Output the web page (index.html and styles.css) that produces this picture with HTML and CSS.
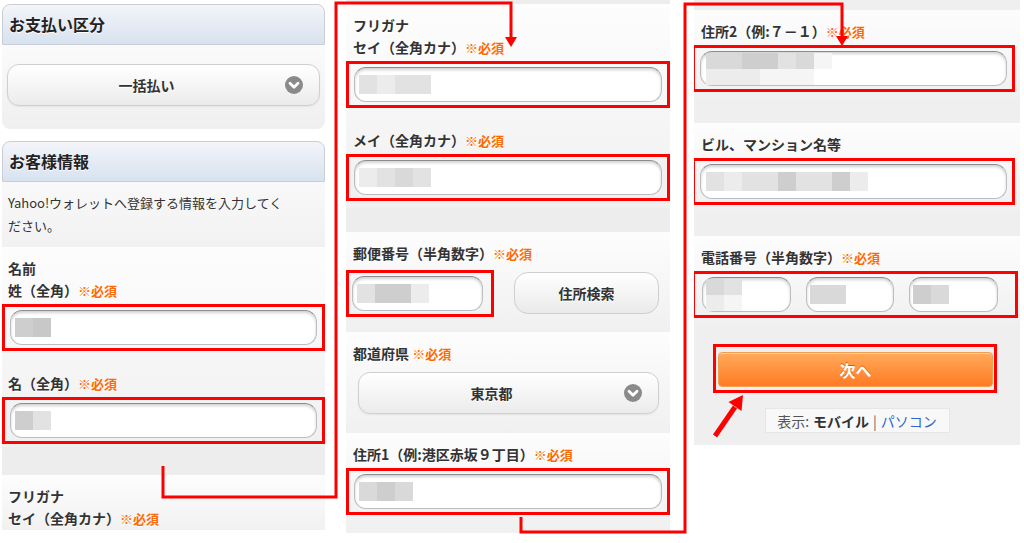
FILE: index.html
```html
<!DOCTYPE html>
<html lang="ja">
<head>
<meta charset="utf-8">
<title>Yahoo!ウォレット 登録</title>
<link rel="stylesheet" href="styles.css">
</head>
<body>
<div class="page">
  <div class="panel p1">
    <div class="hdr">お支払い区分</div>
    <div class="hdr-body">
      <div class="select">
        <span class="sel-text">一括払い</span>
        <svg class="sel-icon" viewBox="0 0 18 18"><circle cx="9" cy="9" r="9" fill="#8a8a8a"/><path d="M5 7.2 L9 11.2 L13 7.2" fill="none" stroke="#fff" stroke-width="2.8" stroke-linecap="round" stroke-linejoin="round"/></svg>
      </div>
    </div>
    <div class="hdr hdr-second">お客様情報</div>
    <div class="intro">Yahoo!ウォレットへ登録する情報を入力してく<br>ださい。</div>
    <div class="sec sec-tight">
      <div class="lbl">名前</div>
      <div class="lbl">姓（全角）<span class="req">※必須</span></div>
      <div class="rb"><div class="inp"><div class="mz"><i class="d"></i><i class="e"></i></div></div></div>
      <div class="lbl gap">名（全角）<span class="req">※必須</span></div>
      <div class="rb"><div class="inp"><div class="mz"><i class="d"></i><i class="b"></i></div></div></div>
    </div>
    <div class="band band-tall"></div>
    <div class="sec sec-fill">
      <div class="lbl">フリガナ</div>
      <div class="lbl">セイ（全角カナ）<span class="req">※必須</span></div>
    </div>
  </div>

  <div class="panel p2">
    <div class="sec first-sec">
      <div class="lbl">フリガナ</div>
      <div class="lbl">セイ（全角カナ）<span class="req">※必須</span></div>
      <div class="rb"><div class="inp"><div class="mz"><i class="b"></i><i class="a"></i><i class="b"></i><i class="b"></i></div></div></div>
      <div class="lbl gap">メイ（全角カナ）<span class="req">※必須</span></div>
      <div class="rb"><div class="inp"><div class="mz"><i class="a"></i><i class="b"></i><i class="c"></i><i class="b"></i></div></div></div>
    </div>
    <div class="band"></div>
    <div class="sec zip-sec">
      <div class="lbl">郵便番号（半角数字）<span class="req">※必須</span></div>
      <div class="ziprow">
        <div class="rb rb-zip"><div class="inp"><div class="mz"><i class="b"></i><i class="d"></i><i class="d"></i><i class="a"></i></div></div></div>
        <div class="btn">住所検索</div>
      </div>
    </div>
    <div class="sec">
      <div class="lbl">都道府県 <span class="req">※必須</span></div>
      <div class="selwrap">
        <div class="select">
          <span class="sel-text">東京都</span>
          <svg class="sel-icon" viewBox="0 0 18 18"><circle cx="9" cy="9" r="9" fill="#8a8a8a"/><path d="M5 7.2 L9 11.2 L13 7.2" fill="none" stroke="#fff" stroke-width="2.8" stroke-linecap="round" stroke-linejoin="round"/></svg>
        </div>
      </div>
    </div>
    <div class="sec sec-fill">
      <div class="lbl">住所1（例:港区赤坂９丁目）<span class="req">※必須</span></div>
      <div class="rb"><div class="inp"><div class="mz"><i class="c"></i><i class="d"></i><i class="c"></i></div></div></div>
    </div>
  </div>

  <div class="panel p3">
    <div class="sec first-sec3">
      <div class="lbl">住所2（例:７－１）<span class="req">※必須</span></div>
      <div class="rb rb3"><div class="inp inp-wide"><div class="mz2">
        <div class="mzr"><i class="c"></i><i class="c"></i><i class="d"></i><i class="d"></i><i class="b"></i><i class="c"></i><i class="f"></i></div>
        <div class="mzr"><i class="a"></i><i class="a"></i><i class="a"></i><i class="f"></i><i class="f"></i><i class="f"></i></div>
      </div></div></div>
    </div>
    <div class="band"></div>
    <div class="sec">
      <div class="lbl">ビル、マンション名等</div>
      <div class="rb rb3"><div class="inp inp-wide"><div class="mz"><i class="b"></i><i class="a"></i><i class="b"></i><i class="b"></i><i class="d"></i><i class="b"></i><i class="b"></i><i class="d"></i><i class="a"></i></div></div></div>
    </div>
    <div class="band"></div>
    <div class="sec">
      <div class="lbl">電話番号（半角数字）<span class="req">※必須</span></div>
      <div class="rb rb-tel">
        <div class="inp inp-tel"><div class="mz2">
          <div class="mzr"><i class="c"></i><i class="b"></i></div>
          <div class="mzr"><i class="a"></i><i class="f"></i></div>
        </div></div>
        <div class="inp inp-tel"><div class="mz"><i class="c"></i><i class="c"></i></div></div>
        <div class="inp inp-tel"><div class="mz"><i class="d"></i><i class="c"></i></div></div>
      </div>
    </div>
    <div class="foot">
      <div class="nextbox"><div class="next">次へ</div></div>
      <div class="view">表示: <b>モバイル</b><span class="sep">|</span><span class="pc">パソコン</span></div>
    </div>
  </div>
</div>

<svg class="notes" viewBox="0 0 1024 543" width="1024" height="543">
  <path d="M163 466 V497 H336 V3 H511 V38" fill="none" stroke="#f00" stroke-width="3"/>
  <polygon points="505,37 517,37 511,47" fill="#f00"/>
  <path d="M521 517 V532 H685 V4 H842 V37" fill="none" stroke="#f00" stroke-width="3"/>
  <polygon points="836,36 848,36 842,46" fill="#f00"/>
  <line x1="715" y1="436" x2="735" y2="407" stroke="#f00" stroke-width="5"/>
  <polygon points="743,395 741.5,411 728.5,402" fill="#f00"/>
</svg>
</body>
</html>
```

FILE: styles.css
```css
* {
  box-sizing: border-box;
  margin: 0;
  padding: 0;
}

body {
  margin: 0;
  width: 1024px;
  height: 543px;
  overflow: hidden;
  position: relative;
  background: #ffffff;
  font-family: "Noto Sans CJK JP", "Noto Sans", sans-serif;
  color: #333333;
}

.page {
  display: flex;
  align-items: flex-start;
  padding-left: 2px;
}

.panel {
  display: flex;
  flex-direction: column;
  overflow: hidden;
  flex: none;
}

.p1 {
  width: 323px;
  height: 526px;
  margin-top: 4px;
}

.p2 {
  width: 324px;
  height: 533px;
  margin-left: 21px;
  background: #ededed;
}

.p3 {
  width: 326px;
  height: 445px;
  margin-left: 24px;
  background: #efefef;
}

/* headers */
.hdr {
  flex: none;
  height: 41px;
  border: 1px solid #c9ced6;
  border-radius: 8px 8px 0 0;
  background: linear-gradient(#f3f5f9, #d8e2f0);
  font-size: 16px;
  font-weight: 700;
  line-height: 39px;
  padding-left: 6px;
  color: #222222;
  text-shadow: 0 1px 0 #ffffff;
}

.hdr-second {
  margin-top: 12px;
}

.hdr-body {
  flex: none;
  height: 84px;
  padding: 19px 5px 0;
  background: linear-gradient(#fbfbfb, #efefef);
  border-radius: 0 0 8px 8px;
}

/* select */
.select {
  height: 42px;
  border: 1px solid #cfcfcf;
  border-radius: 12px;
  background: linear-gradient(#ffffff, #ebebeb);
  display: flex;
  align-items: center;
  padding: 0 16px 0 10px;
  box-shadow: 0 1px 2px rgba(0, 0, 0, 0.06);
}

.sel-text {
  flex: 1;
  text-align: center;
  font-size: 14px;
  font-weight: 700;
  color: #333333;
  text-shadow: 0 1px 0 #ffffff;
}

.sel-icon {
  width: 18px;
  height: 18px;
  margin-left: 10px;
  flex: none;
}

.selwrap {
  padding: 8px 11px 12px 12px;
}

.intro {
  flex: none;
  height: 65px;
  padding: 9px 6px 0;
  font-size: 13px;
  line-height: 23px;
  background: linear-gradient(#f9f9f9, #f1f1f1);
  color: #333333;
}

/* sections */
.sec {
  flex: none;
  background: linear-gradient(#fdfdfd, #f0f0f0);
  padding: 10px 0 7px;
}

.sec-tight {
  padding-bottom: 3px;
}

.sec-fill {
  flex: 1;
}

.first-sec {
  margin-top: 4px;
}

.first-sec3 {
  margin-top: 10px;
}

.zip-sec {
  padding-bottom: 15px;
}

.band {
  flex: none;
  height: 24px;
  background: #ededed;
}

.p3 .band {
  background: #efefef;
}

.band-tall {
  height: 28px;
}

.lbl {
  height: 22px;
  font-size: 14px;
  font-weight: 700;
  line-height: 22px;
  padding-left: 6px;
  color: #333333;
  white-space: nowrap;
  text-shadow: 0 1px 0 #ffffff;
}

.p2 .lbl,
.p3 .lbl {
  padding-left: 7px;
}

.gap {
  margin-top: 21px;
}

.req {
  color: #ff6a00;
  font-size: 13px;
  line-height: 1;
}

/* red annotation box */
.rb {
  border: 3px solid #ff0000;
  padding: 3px 5px;
  margin-top: 3px;
}

.rb3 {
  margin-left: -2px;
  margin-right: 5px;
}

.rb-zip {
  width: 148px;
  flex: none;
  padding: 3px 8px 3px 3px;
}

.rb-tel {
  margin-left: -2px;
  margin-right: 2px;
  display: grid;
  grid-template-columns: 1fr 1fr 1fr;
  column-gap: 15px;
  padding: 3px 17px 3px 7px;
}

/* inputs */
.inp {
  height: 35px;
  background: #ffffff;
  border: 1px solid #bdbdbd;
  border-top-color: #8c8c8c;
  border-radius: 12px;
  box-shadow: inset 0 2px 3px rgba(0, 0, 0, 0.18);
  display: flex;
  align-items: center;
  padding-left: 4px;
}

.inp-wide {
  padding-left: 5px;
}

.inp-tel {
  padding-left: 3px;
}

.mz {
  display: flex;
}

.mz i,
.mzr i {
  display: block;
  width: 18px;
  height: 19px;
}

.mz2 {
  display: flex;
  flex-direction: column;
}

.mzr {
  display: flex;
}

.mzr i {
  height: 16px;
}

.a { background: #ececec; }
.b { background: #e2e2e2; }
.c { background: #d9d9d9; }
.d { background: #cecece; }
.e { background: #c8c8c8; }
.f { background: #f5f5f5; }

/* zip row */
.ziprow {
  display: flex;
  align-items: flex-start;
  margin-top: 3px;
}

.btn {
  margin-left: 20px;
  margin-top: 5px;
  width: 145px;
  height: 42px;
  border: 1px solid #cfcfcf;
  border-radius: 14px;
  background: linear-gradient(#ffffff, #eaeaea);
  font-size: 14px;
  font-weight: 700;
  display: flex;
  align-items: center;
  justify-content: center;
  color: #333333;
  text-shadow: 0 1px 0 #ffffff;
}

/* footer in panel 3 */
.foot {
  flex: 1;
  display: flex;
  flex-direction: column;
}

.nextbox {
  margin: 19px 23px 0 19px;
  border: 3px solid #ff0000;
  padding: 5px 1px 3px 2px;
}

.next {
  height: 35px;
  border: 1px solid #f0a050;
  border-radius: 4px;
  background: linear-gradient(#ffab5c, #ff7a24);
  box-shadow: inset 0 1px 0 rgba(255, 255, 255, 0.4);
  color: #ffffff;
  font-size: 16px;
  font-weight: 700;
  display: flex;
  align-items: center;
  justify-content: center;
  text-shadow: 0 -1px 0 #d2601c;
}

.view {
  margin: 15px auto 0;
  width: 185px;
  height: 25px;
  background: #f8f8f8;
  border: 1px solid #e6e6e6;
  font-size: 14px;
  color: #555555;
  display: flex;
  align-items: center;
  justify-content: center;
  white-space: nowrap;
}

.view b {
  color: #333333;
  margin-left: 4px;
}

.sep {
  margin: 0 4px;
  color: #666666;
}

.pc {
  color: #3366cc;
}

/* annotations overlay */
.notes {
  position: absolute;
  left: 0;
  top: 0;
  width: 1024px;
  height: 543px;
  pointer-events: none;
}
```
